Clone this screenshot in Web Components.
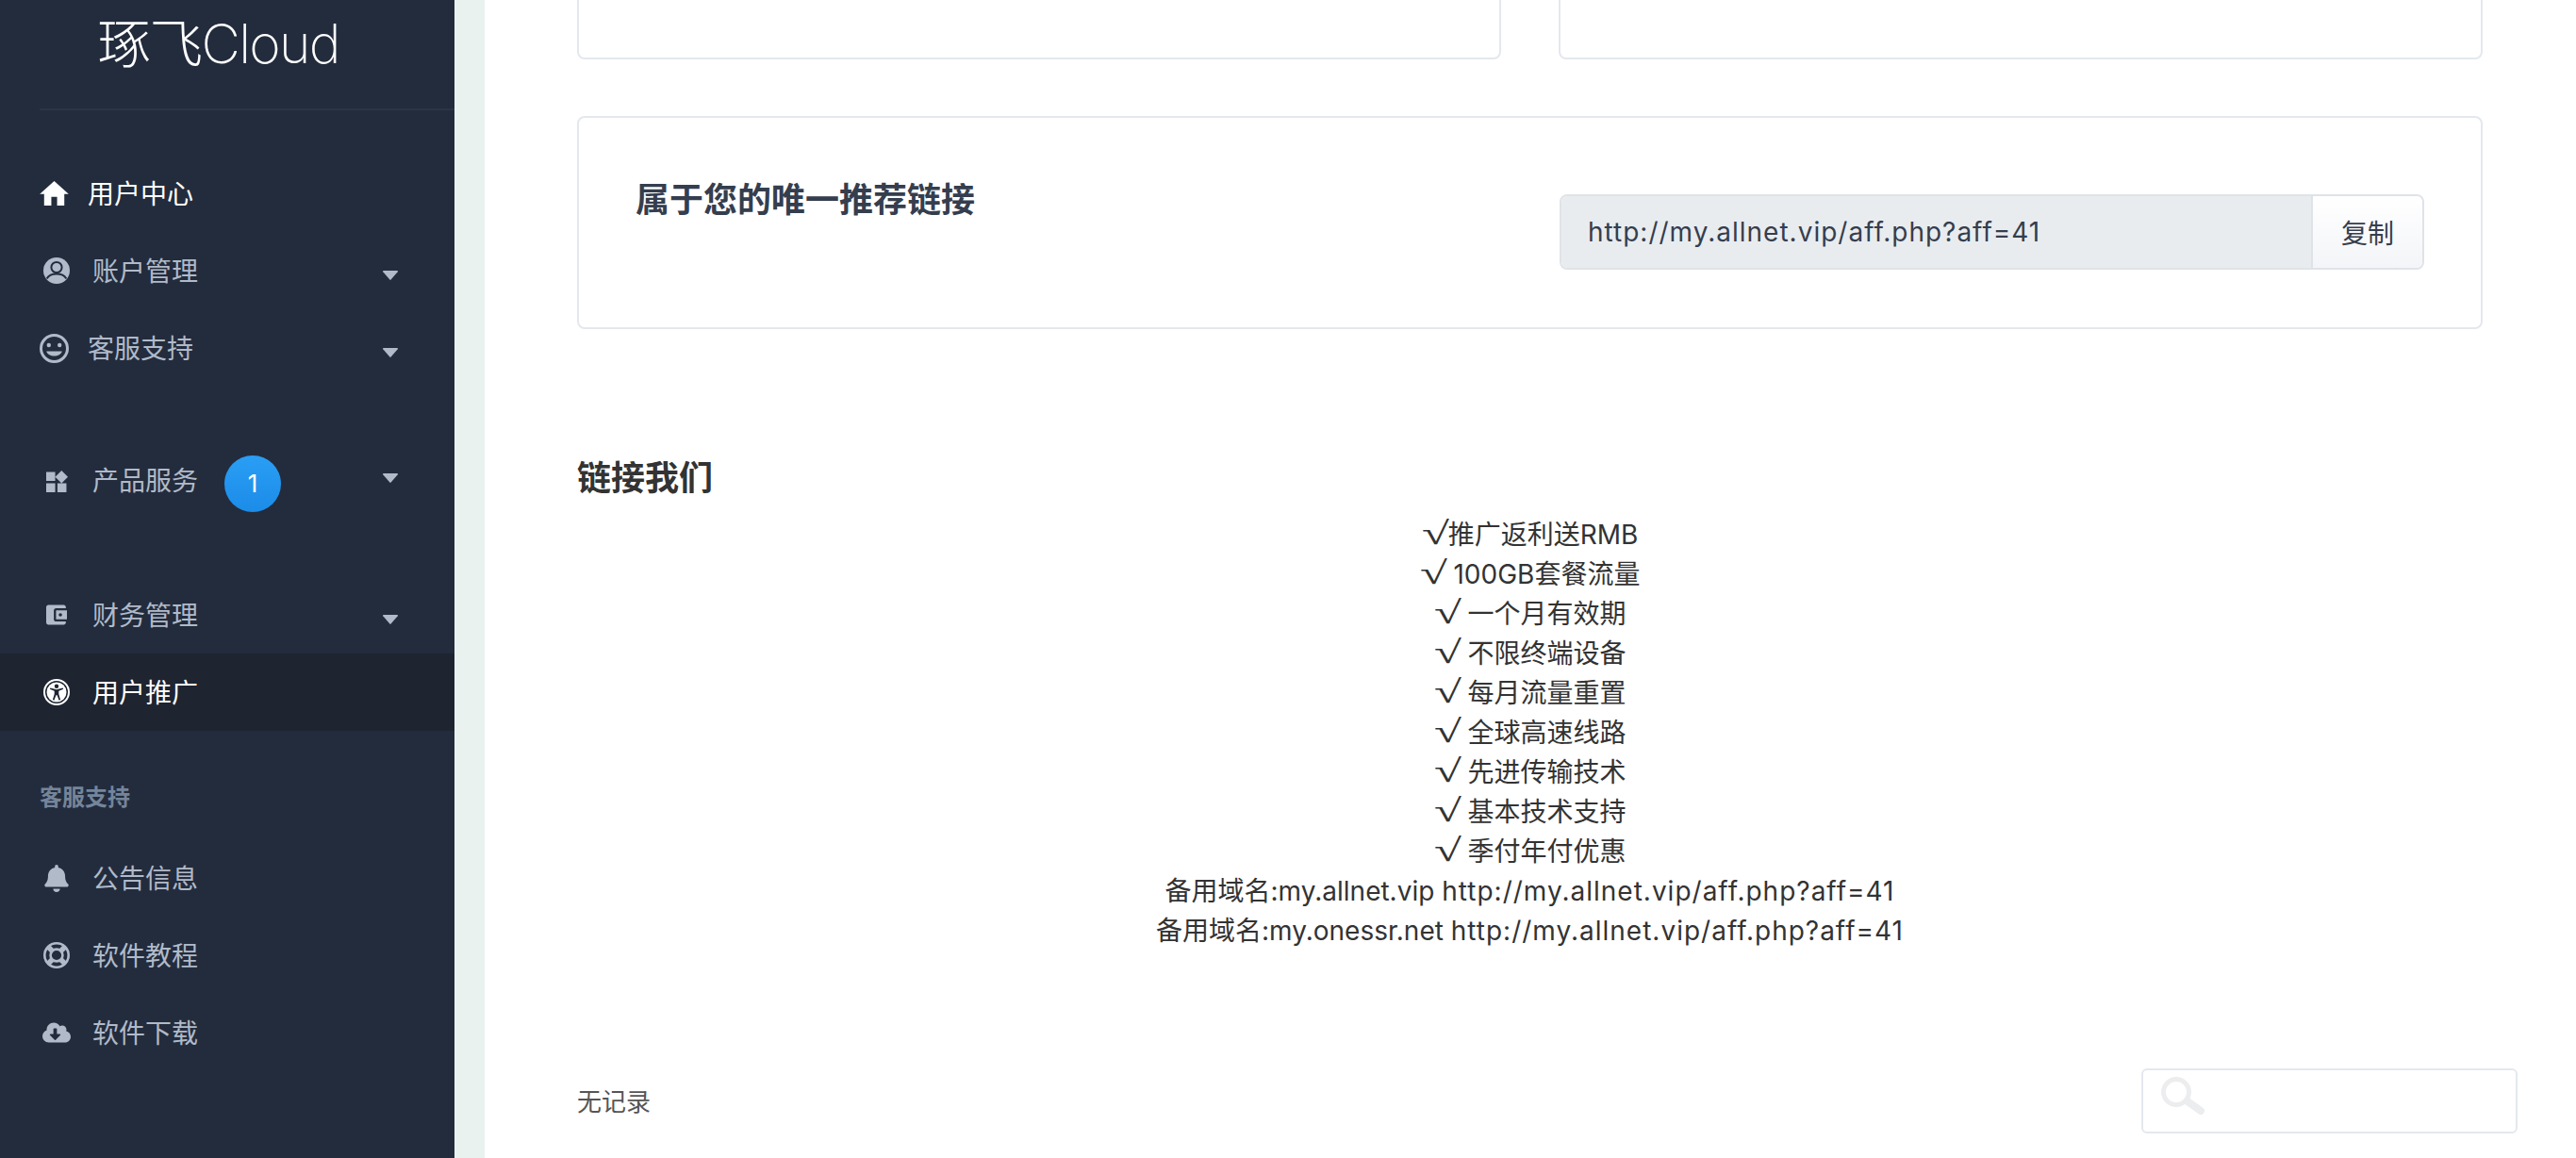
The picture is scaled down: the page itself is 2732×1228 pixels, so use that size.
<!DOCTYPE html>
<html lang="zh-CN">
<head>
<meta charset="utf-8">
<title>用户推广</title>
<style>
  html, body { margin: 0; height: 100%; overflow: hidden; background: #fff; }
  body { font-family: Inter, "Noto Sans CJK SC", sans-serif; }
  .tick {
    display: inline-block;
    width: 28px;
    font: 34px/1 "Liberation Serif", serif;
    text-align: left;
    transform: scaleX(1.55);
    transform-origin: left bottom;
  }
  .addr { letter-spacing: 1px; }
</style>
</head>
<body>
<app-shell>
  <side-bar slot="side" brand="琢飞Cloud">
    <nav-item icon="home" start active>用户中心</nav-item>
    <nav-item icon="account" caret>账户管理</nav-item>
    <nav-item icon="smile" start caret>客服支持</nav-item>
    <nav-item icon="widgets" caret="up" badge="1" tall>产品服务</nav-item>
    <nav-item icon="wallet" caret>财务管理</nav-item>
    <nav-item icon="access" current>用户推广</nav-item>
    <nav-label>客服支持</nav-label>
    <nav-item icon="bell">公告信息</nav-item>
    <nav-item icon="buoy">软件教程</nav-item>
    <nav-item icon="cloud">软件下载</nav-item>
  </side-bar>

  <stub-cards></stub-cards>
  <link-card heading="属于您的唯一推荐链接" url="http://my.allnet.vip/aff.php?aff=41" action="复制"></link-card>
  <promo-block heading="链接我们">
    <div><span class="tick">√</span>推广返利送RMB</div>
    <div><span class="tick">√</span> 100GB套餐流量</div>
    <div><span class="tick">√</span> 一个月有效期</div>
    <div><span class="tick">√</span> 不限终端设备</div>
    <div><span class="tick">√</span> 每月流量重置</div>
    <div><span class="tick">√</span> 全球高速线路</div>
    <div><span class="tick">√</span> 先进传输技术</div>
    <div><span class="tick">√</span> 基本技术支持</div>
    <div><span class="tick">√</span> 季付年付优惠</div>
    <div>备用域名:my.allnet.vip <span class="addr">http://my.allnet.vip/aff.php?aff=41</span></div>
    <div>备用域名:my.onessr.net <span class="addr">http://my.allnet.vip/aff.php?aff=41</span></div>
  </promo-block>
  <record-bar>无记录</record-bar>
</app-shell>

<script>
/* icons for the sidebar, all filled with currentColor */
const ICONS = {
  home: [31, 26, '<svg viewBox="2 3 20 17"><path d="M10 20v-6h4v6h5v-8h3L12 3 2 12h3v8z"/></svg>'],
  account: [28, 28, `<svg viewBox="0 0 28 28"><circle cx="14" cy="14" r="14"/>
    <circle cx="14" cy="10.500" r="5.600" fill="none" stroke="#232c3d" stroke-width="2"/>
    <path d="M3.600 22.500C6 18.600 9.500 17.600 14 17.600s8 1 10.400 4.900" fill="none" stroke="#232c3d" stroke-width="2"/></svg>`],
  smile: [31, 31, `<svg viewBox="0 0 31 31"><circle cx="15.500" cy="15.500" r="14" fill="none" stroke="currentColor" stroke-width="3"/>
    <circle cx="9.800" cy="12" r="2.200"/><circle cx="21.200" cy="12" r="2.200"/>
    <path d="M7.200 18.600h16.600c-1 3.200-4.400 5-8.300 5s-7.300-1.800-8.300-5z"/></svg>`],
  widgets: [23, 23, '<svg viewBox="3 1.700 19.300 19.300"><path d="M13 13v8h8v-8h-8zM3 21h8v-8H3v8zM3 3v8h8V3H3zm13.660-1.310L11 7.340 16.660 13l5.660-5.660-5.660-5.650z"/></svg>'],
  wallet: [22, 22, '<svg viewBox="3 3 19 18"><path d="M21 18v1c0 1.100-.9 2-2 2H5c-1.110 0-2-.9-2-2V5c0-1.100.89-2 2-2h14c1.100 0 2 .9 2 2v1h-9c-1.110 0-2 .9-2 2v8c0 1.100.9 2 2 2h9zm-9-2h10V8H12v8zm4-2.500c-.83 0-1.500-.67-1.500-1.500s.67-1.500 1.500-1.500 1.500.67 1.500 1.500-.67 1.500-1.500 1.500z"/></svg>'],
  access: [28, 28, `<svg viewBox="0 0 28 28"><circle cx="14" cy="14" r="13" fill="none" stroke="currentColor" stroke-width="2"/>
    <circle cx="14" cy="14" r="10.500"/>
    <g fill="#1e2430"><circle cx="14" cy="7.800" r="2.200"/>
    <path d="M6.800 10.800l.6-1.300 6.600 1.700 6.600-1.700.6 1.300-4.900 1.900v3.300l1.800 6.100-1.500.6-2-5.400h-1.200l-2 5.400-1.500-.6 1.800-6.100v-3.300z"/></g></svg>`],
  bell: [26, 29, '<svg viewBox="0 0 448 512"><path d="M224 512c35.320 0 63.970-28.650 63.970-64H160.030c0 35.350 28.650 64 63.970 64zm215.390-149.710c-19.320-20.760-55.470-51.990-55.470-154.290 0-77.700-54.480-139.900-127.940-155.160V32c0-17.670-14.320-32-31.980-32s-31.980 14.330-31.980 32v20.840C118.560 68.100 64.080 130.300 64.080 208c0 102.300-36.150 133.530-55.470 154.290-6 6.450-8.660 14.160-8.610 21.710.11 16.400 12.980 32 32.100 32h383.800c19.120 0 32-15.600 32.100-32 .05-7.550-2.610-15.270-8.610-21.710z"/></svg>'],
  buoy: [28, 28, `<svg viewBox="0 0 28 28"><g fill="none" stroke="currentColor"><circle cx="14" cy="14" r="12.700" stroke-width="2.600"/>
    <circle cx="14" cy="14" r="6.400" stroke-width="2.600"/>
    <path stroke-width="5.500" d="M5 5l5 5M23 5l-5 5M5 23l5-5M23 23l-5-5"/></g></svg>`],
  cloud: [30, 24, '<svg viewBox="0 32 640 448"><path d="M537.600 226.600c4.100-10.700 6.400-22.400 6.400-34.600 0-53-43-96-96-96-19.700 0-38.100 6-53.300 16.200C367 64.200 315.300 32 256 32c-88.400 0-160 71.600-160 160 0 2.700.1 5.400.2 8.100C40.200 219.800 0 273.200 0 336c0 79.500 64.500 144 144 144h368c70.700 0 128-57.300 128-128 0-61.900-44-113.600-102.400-125.400zm-132.900 88.700L299.300 420.700c-6.200 6.200-16.400 6.200-22.600 0L171.300 315.300c-10.100-10.100-2.900-27.300 11.300-27.300H248V176c0-8.800 7.200-16 16-16h48c8.800 0 16 7.200 16 16v112h65.400c14.200 0 21.400 17.200 11.300 27.300z"/></svg>']
};

class AppShell extends HTMLElement {
  constructor() {
    super();
    this.attachShadow({ mode: 'open' });
    this.shadowRoot.innerHTML = `
      <style>
        :host { display: grid; grid-template-columns: 482px 32px 1fr; height: 100vh; overflow: hidden; }
        .band { background: #e9f2ef; }
        main { background: #fff; padding: 0 99px 0 98px; min-width: 0; }
      </style>
      <slot name="side"></slot>
      <div class="band"></div>
      <main><slot></slot></main>
    `;
  }
}

class SideBar extends HTMLElement {
  constructor() {
    super();
    this.attachShadow({ mode: 'open' });
  }

  connectedCallback() {
    this.shadowRoot.innerHTML = `
      <style>
        :host { display: flex; flex-direction: column; background: #232c3d; height: 100%; overflow: hidden; }
        .brand {
          height: 115px;
          box-sizing: border-box;
          padding: 14px 0 0 103px;
          color: #fff;
          font: 200 57px/66px Inter, "Noto Sans CJK SC", sans-serif;
          letter-spacing: -1.700px;
          white-space: nowrap;
        }
        hr { height: 2px; margin: 0 0 47px 42px; border: 0; background: #293648; flex: none; }
      </style>
      <div class="brand">${this.getAttribute('brand')}</div>
      <hr>
      <slot></slot>
    `;
  }
}

class NavItem extends HTMLElement {
  constructor() {
    super();
    this.attachShadow({ mode: 'open' });
  }

  connectedCallback() {
    const [w, h, svg] = ICONS[this.getAttribute('icon')];
    const caret = this.getAttribute('caret');
    const badge = this.getAttribute('badge');
    this.shadowRoot.innerHTML = `
      <style>
        :host {
          display: flex;
          align-items: center;
          flex: none;
          height: 82px;
          padding-left: 46px;
          color: #b0bac9;
          font-size: 28px;
        }
        :host([start]) { padding-left: 42px; }
        :host([tall]) { height: 201px; }
        :host([active]) { color: #fff; }
        :host([current]) { color: #fff; background: #1e2430; }
        .icon { width: 28px; margin-right: 24px; display: flex; justify-content: center; flex: none; }
        :host([start]) .icon { width: 31px; margin-right: 20px; }
        .icon svg { width: ${w}px; height: ${h}px; fill: currentColor; display: block; overflow: visible; }
        .label { padding-bottom: 2px; }
        :host([tall]) .label { padding-bottom: 5px; }
        .badge {
          width: 60px; height: 60px; margin: 4px 0 0 28px;
          border-radius: 50%;
          background: linear-gradient(#2a9ef5, #1b8ce8);
          color: #fff;
          font-size: 26px;
          display: flex; align-items: center; justify-content: center;
        }
        .caret { margin: 10px 60px 0 auto; width: 16px; height: 10px; }
        .caret.up { margin-top: -8px; }
        .caret svg { display: block; fill: #b0bac9; }
      </style>
      <span class="icon">${svg}</span>
      <span class="label"><slot></slot></span>
      ${badge ? `<span class="badge">${badge}</span>` : ''}
      ${caret !== null ? `<span class="caret ${caret}"><svg width="16" height="10" viewBox="0 0 16 10"><path d="M.8 0h14.400c.7 0 1 .8.6 1.300L8.600 9.600a.8.8 0 0 1-1.200 0L.2 1.300C-.2.8.1 0 .8 0z"/></svg></span>` : ''}
    `;
  }
}

class NavLabel extends HTMLElement {
  constructor() {
    super();
    this.attachShadow({ mode: 'open' });
    this.shadowRoot.innerHTML = `
      <style>
        :host {
          display: block;
          flex: none;
          margin: 54px 0 27px;
          padding-left: 42px;
          color: #74859b;
          font-size: 24px;
          font-weight: 700;
          line-height: 34px;
        }
      </style>
      <slot></slot>
    `;
  }
}

/* the two cards whose bottom edge shows at the top of the scrolled page */
class StubCards extends HTMLElement {
  constructor() {
    super();
    this.attachShadow({ mode: 'open' });
    this.shadowRoot.innerHTML = `
      <style>
        :host { display: grid; grid-template-columns: 1fr 1fr; gap: 61px; height: 63px; }
        div { border: 2px solid #e4e8ee; border-top: 0; border-radius: 0 0 8px 8px; }
      </style>
      <div></div><div></div>
    `;
  }
}

class LinkCard extends HTMLElement {
  constructor() {
    super();
    this.attachShadow({ mode: 'open' });
  }

  connectedCallback() {
    this.shadowRoot.innerHTML = `
      <style>
        :host {
          display: flex;
          justify-content: space-between;
          align-items: flex-start;
          box-sizing: border-box;
          height: 226px;
          margin-top: 60px;
          padding: 66px 60px 0 60px;
          border: 2px solid #e4e8ee;
          border-radius: 8px;
          color: #353e4e;
        }
        h3 { margin: 0; font-size: 36px; line-height: 43px; font-weight: 700; }
        .group {
          display: flex;
          width: 917px;
          height: 80px;
          margin-top: 15px;
          box-sizing: border-box;
          border: 2px solid #dfe3e8;
          border-radius: 8px;
          overflow: hidden;
          font-size: 28px;
        }
        .url { flex: 1; display: flex; align-items: center; padding-left: 28px; background: #e9ecef; letter-spacing: 1px; }
        button {
          width: 118px;
          border: 0;
          border-left: 2px solid #dfe3e8;
          background: linear-gradient(#fff, #f3f5f8);
          color: inherit;
          font: inherit;
          padding: 0;
        }
      </style>
      <h3>${this.getAttribute('heading')}</h3>
      <div class="group">
        <div class="url">${this.getAttribute('url')}</div>
        <button>${this.getAttribute('action')}</button>
      </div>
    `;
  }
}

class PromoBlock extends HTMLElement {
  constructor() {
    super();
    this.attachShadow({ mode: 'open' });
  }

  connectedCallback() {
    this.shadowRoot.innerHTML = `
      <style>
        :host { display: block; margin-top: 137px; color: #333; }
        h4 { margin: 0 0 17px; font-size: 36px; line-height: 43px; font-weight: 700; }
        .lines { text-align: center; font-size: 28px; line-height: 42px; }
      </style>
      <h4>${this.getAttribute('heading')}</h4>
      <div class="lines"><slot></slot></div>
    `;
  }
}

class RecordBar extends HTMLElement {
  constructor() {
    super();
    this.attachShadow({ mode: 'open' });
    this.shadowRoot.innerHTML = `
      <style>
        :host {
          display: flex;
          justify-content: space-between;
          align-items: center;
          margin: 125px -37px 0 0;
          color: #555;
          font-size: 26px;
        }
        span { padding-bottom: 3px; }
        .search {
          width: 399px;
          height: 69px;
          box-sizing: border-box;
          border: 2px solid #e4e8ee;
          border-radius: 6px;
          padding: 7px 0 0 18px;
        }
        svg { display: block; }
      </style>
      <span><slot></slot></span>
      <div class="search">
        <svg width="50" height="44" viewBox="0 0 50 44" fill="none" stroke="#ecedef" stroke-linecap="round">
          <circle cx="17" cy="16" r="13.500" stroke-width="5"/>
          <path d="M29 26l14 10" stroke-width="8"/>
        </svg>
      </div>
    `;
  }
}

customElements.define('app-shell', AppShell);
customElements.define('side-bar', SideBar);
customElements.define('nav-item', NavItem);
customElements.define('nav-label', NavLabel);
customElements.define('stub-cards', StubCards);
customElements.define('link-card', LinkCard);
customElements.define('promo-block', PromoBlock);
customElements.define('record-bar', RecordBar);
</script>
</body>
</html>
